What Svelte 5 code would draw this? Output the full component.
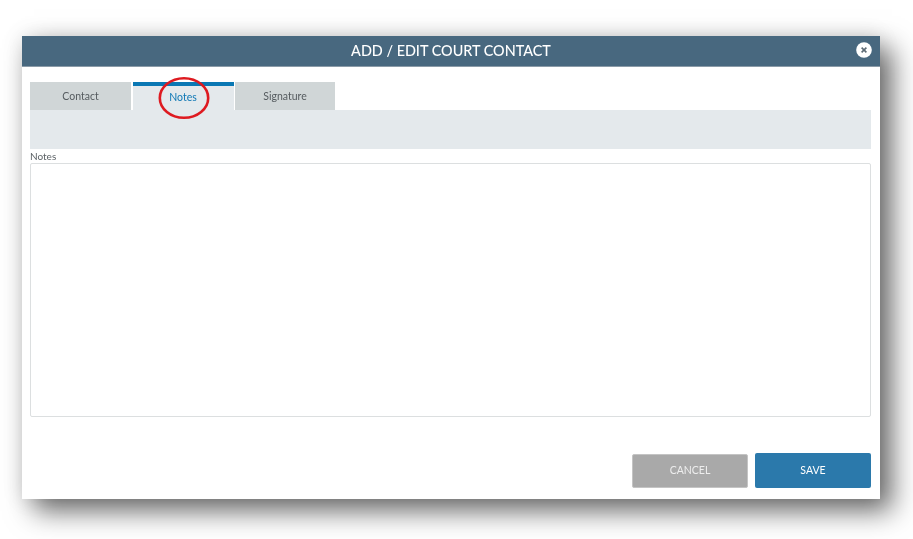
<script>
  const tabs = ['Contact', 'Notes', 'Signature'];
  const active = 'Notes';
</script>

<div class="page">
  <section class="dialog">
    <header class="head">
      <h1>ADD / EDIT COURT CONTACT</h1>
      <span class="close" aria-label="Close">
        <svg width="16" height="16" viewBox="0 0 16 16">
          <circle cx="8" cy="8" r="7.8" fill="#fff" />
          <path d="M5.6 5.6l4.8 4.8M10.4 5.6l-4.8 4.8" stroke="#5d6b75" stroke-width="1.6" fill="none" />
        </svg>
      </span>
    </header>
    <div class="body">
      <nav class="tabs">
        {#each tabs as t}
          <div class="tab" class:active={t === active}>
            <span class="soft">{t}</span>
            {#if t === active}
              <svg class="ring" width="52" height="44" viewBox="0 0 52 44">
                <ellipse cx="26" cy="22" rx="24.2" ry="19.8" fill="none" stroke="#de1a20" stroke-width="2.6" />
              </svg>
            {/if}
          </div>
        {/each}
      </nav>
      <div class="band"></div>
      <div class="label"><span class="soft">Notes</span></div>
      <div class="area"></div>
      <footer class="actions">
        <div class="btn cancel"><span class="soft">CANCEL</span></div>
        <div class="btn save"><span class="soft">SAVE</span></div>
      </footer>
    </div>
  </section>
</div>

<style>
  :global(body) { margin: 0; background: #fff; }
  .page {
    width: 913px;
    height: 539px;
    box-sizing: border-box;
    padding: 36px 33px 0 22px;
    overflow: hidden;
    font-family: Lato, "Open Sans", sans-serif;
  }
  .dialog {
    width: 858px;
    height: 463px;
    background: #fff;
    display: flex;
    flex-direction: column;
    box-shadow: 12px 12px 26px rgba(0,0,0,.58), 0 0 20px rgba(0,0,0,.1);
  }
  .head {
    position: relative;
    height: 31px;
    flex: none;
    background: #48687f;
    border-bottom: 1px solid #8b9ba8;
    box-sizing: border-box;
    display: flex;
    align-items: center;
    justify-content: center;
  }
  h1 {
    margin: 0;
    color: #fff;
    font-size: 14.4px;
    font-weight: 500;
    line-height: 1;
    filter: blur(0.4px);
  }
  .soft { filter: blur(0.4px); display: inline-block; }
  .close {
    position: absolute;
    right: 8px;
    top: 6px;
    width: 16px;
    height: 16px;
  }
  .close svg { display: block; }
  .body {
    flex: 1;
    display: flex;
    flex-direction: column;
    padding: 15px 9px 11px 8px;
  }
  .tabs {
    display: flex;
    gap: 1.5px;
    height: 28px;
    flex: none;
  }
  .tab {
    position: relative;
    width: 101px;
    display: flex;
    align-items: center;
    justify-content: center;
    background: #d0d6d7;
    color: #555b5f;
    font-size: 10.5px;
    padding-bottom: 1px;
    box-sizing: border-box;
  }
  .tab:last-child { width: 100px; }
  .tab.active {
    background: #e4e9ec;
    color: #0f78b5;
    border-top: 4px solid #0a78b4;
    padding-bottom: 2px;
  }
  .ring {
    position: absolute;
    left: 25px;
    top: -10px;
  }
  .band {
    height: 39px;
    flex: none;
    background: #e4e9ec;
  }
  .label {
    height: 14px;
    flex: none;
    font-size: 10px;
    line-height: 15px;
    color: #5c6266;
  }
  .area {
    height: 254px;
    flex: none;
    box-sizing: border-box;
    background: #fff;
    border: 1px solid #dcdfe0;
    border-radius: 2px;
  }
  .actions {
    margin-top: auto;
    display: flex;
    justify-content: flex-end;
    align-items: flex-end;
    gap: 7px;
  }
  .btn {
    width: 116px;
    display: flex;
    align-items: center;
    justify-content: center;
    color: #fff;
    font-size: 10.5px;
    padding-bottom: 1px;
    border-radius: 2px;
    box-sizing: border-box;
  }
  .cancel { height: 34px; background: #a9a9a9; border: 1px solid #c4c4c4; color: #eee; padding-bottom: 2px; }
  .save { height: 35px; background: #2b79ab; }
</style>
